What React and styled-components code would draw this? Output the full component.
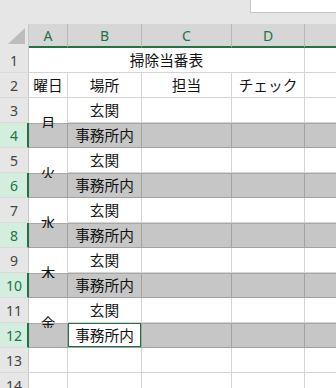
import React from "react";
import styled, { createGlobalStyle } from "styled-components";

const GREEN = "#217346";
const COLS = "29px 39px 74px 90px 73px 80px";
const CELL_FONT = `"Noto Sans CJK JP", "Noto Sans", sans-serif`;

const rows = [
  { n: 1, title: "掃除当番表" },
  { n: 2, cells: ["曜日", "場所", "担当", "チェック"] },
  { n: 3, day: "月", place: "玄関" },
  { n: 4, sel: true, place: "事務所内" },
  { n: 5, day: "火", place: "玄関" },
  { n: 6, sel: true, place: "事務所内" },
  { n: 7, day: "水", place: "玄関" },
  { n: 8, sel: true, place: "事務所内" },
  { n: 9, day: "木", place: "玄関" },
  { n: 10, sel: true, place: "事務所内" },
  { n: 11, day: "金", place: "玄関" },
  { n: 12, sel: true, place: "事務所内", active: true },
  { n: 13 },
  { n: 14 },
];

const App = () => {
  return (
    <Page>
      <Global />
      <TopBar>
        <NameBox />
      </TopBar>
      <HeaderRow>
        <Corner>
          <svg width="29" height="24" viewBox="0 0 29 24">
            <polygon points="25,4 25,20 8,20" fill="#bdbdbd" />
          </svg>
        </Corner>
        {["A", "B", "C", "D", ""].map((c, i) => (
          <ColHead key={i}>{c}</ColHead>
        ))}
      </HeaderRow>
      {rows.map(r => (
        <Row key={r.n}>
          <RowHead $sel={r.sel}>{r.n}</RowHead>
          {r.title ? (
            <>
              <Cell $span={4}>{r.title}</Cell>
              <Cell />
            </>
          ) : r.cells ? (
            <>
              {r.cells.map(t => (
                <Cell key={t}>{t}</Cell>
              ))}
              <Cell />
            </>
          ) : (
            <>
              <Cell $sel={r.sel} $merged={!!r.day}>
                {r.day && (
                  <MergedLabel>
                    <span>{r.day}</span>
                  </MergedLabel>
                )}
              </Cell>
              <Cell $sel={r.sel} $active={r.active}>
                {r.place}
              </Cell>
              <Cell $sel={r.sel} />
              <Cell $sel={r.sel} />
              <Cell $sel={r.sel} />
            </>
          )}
        </Row>
      ))}
    </Page>
  );
};

export default App;

const Global = createGlobalStyle`
  html, body {
    margin: 0;
    padding: 0;
    background: #fff;
    overflow: hidden;
  }
`;

const Page = styled.div`
  width: 336px;
  height: 388px;
  overflow: hidden;
  background: #fff;
`;

const TopBar = styled.div`
  height: 24px;
  background: #e6e6e6;
  display: flex;
  justify-content: flex-end;
  align-items: flex-start;
`;

const NameBox = styled.div`
  width: 85px;
  height: 12px;
  background: #fff;
  border-left: 1px solid #c6c6c6;
  border-bottom: 1px solid #c6c6c6;
`;

const HeaderRow = styled.div`
  display: grid;
  grid-template-columns: ${COLS};
  height: 24px;
`;

const Corner = styled.div`
  background: #e6e6e6;
  border-right: 1px solid #c8c8c8;
  box-sizing: border-box;
  svg {
    display: block;
  }
`;

const ColHead = styled.div`
  box-sizing: border-box;
  background: #d6d6d6;
  border-right: 1px solid #b9b9b9;
  border-bottom: 2px solid ${GREEN};
  color: ${GREEN};
  font-family: "Noto Sans", "Open Sans", sans-serif;
  font-size: 14px;
  display: flex;
  align-items: center;
  justify-content: center;
  padding-top: 1px;
`;

const Row = styled.div`
  display: grid;
  grid-template-columns: ${COLS};
  height: 25px;
`;

const RowHead = styled.div`
  box-sizing: border-box;
  background: ${p => (p.$sel ? "#d3eddf" : "#e6e6e6")};
  color: ${p => (p.$sel ? GREEN : "#444")};
  border-right: ${p => (p.$sel ? `2px solid ${GREEN}` : "1px solid #c8c8c8")};
  border-bottom: 1px solid #dadada;
  font-family: "Noto Sans", "Open Sans", sans-serif;
  font-size: 14px;
  display: flex;
  align-items: center;
  justify-content: center;
  padding-left: ${p => (p.$sel ? "1px" : "0")};
`;

const Cell = styled.div`
  position: relative;
  box-sizing: border-box;
  grid-column: span ${p => p.$span || 1};
  background: ${p => (p.$sel && !p.$active ? "#c6c6c6" : "#fff")};
  border-right: 1px solid ${p => (p.$sel ? "#a2a2a2" : "#d4d4d4")};
  border-bottom: 1px solid
    ${p => (p.$merged ? "transparent" : p.$sel ? "#a2a2a2" : "#d4d4d4")};
  box-shadow: ${p =>
    p.$active
      ? `inset 0 0 0 1px ${GREEN}`
      : p.$sel
      ? "inset 0 1px 0 #a8a8a8"
      : "none"};
  color: #111;
  font-family: ${CELL_FONT};
  font-size: 14.67px;
  line-height: 1;
  display: flex;
  align-items: center;
  justify-content: center;
  padding-top: 1px;
`;

const MergedLabel = styled.div`
  position: absolute;
  left: 0;
  right: 0;
  top: 0;
  height: 30px;
  overflow: hidden;
  z-index: 2;
  text-align: center;
  span {
    display: block;
    padding-top: 17px;
    line-height: 15px;
  }
`;
